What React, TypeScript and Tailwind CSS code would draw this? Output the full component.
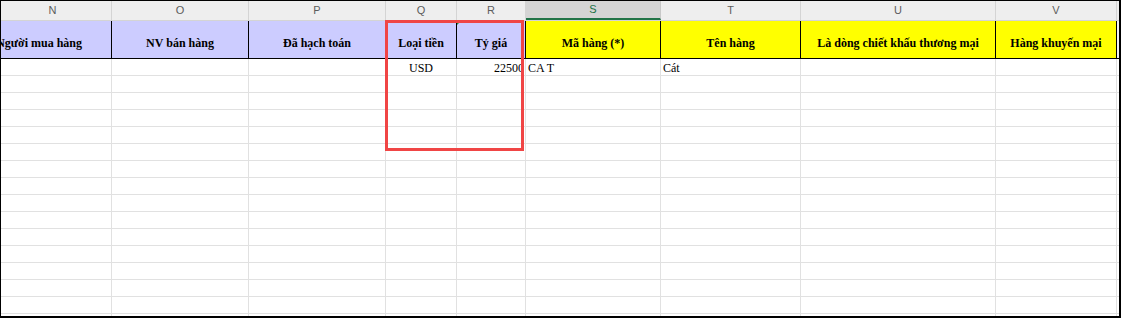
type Col = {
  key: string;
  w: string;
  head: string;
  bg: string;
};

const cols: Col[] = [
  { key: "N", w: "w-[111px]", head: "Người mua hàng", bg: "bg-[#ccccff]" },
  { key: "O", w: "w-[137px]", head: "NV bán hàng", bg: "bg-[#ccccff]" },
  { key: "P", w: "w-[137px]", head: "Đã hạch toán", bg: "bg-[#ccccff]" },
  { key: "Q", w: "w-[71px]", head: "Loại tiền", bg: "bg-[#ccccff]" },
  { key: "R", w: "w-[69px]", head: "Tỷ giá", bg: "bg-[#ccccff]" },
  { key: "S", w: "w-[135px]", head: "Mã hàng (*)", bg: "bg-[#ffff00]" },
  { key: "T", w: "w-[140px]", head: "Tên hàng", bg: "bg-[#ffff00]" },
  { key: "U", w: "w-[195px]", head: "Là dòng chiết khấu thương mại", bg: "bg-[#ffff00]" },
  { key: "V", w: "w-[121px]", head: "Hàng khuyến mại", bg: "bg-[#ffff00]" },
];

const firstRow: Record<string, { text: string; align: string }> = {
  Q: { text: "USD", align: "justify-center" },
  R: { text: "22500", align: "justify-end pr-[1px]" },
  S: { text: "CA T", align: "justify-start pl-[2px]" },
  T: { text: "Cát", align: "justify-start pl-[2px]" },
};

function LetterRow() {
  return (
    <div className="flex h-[20px] shrink-0 border-b border-[#d4d4d4] bg-[#eeeeee] font-['Liberation_Sans',sans-serif] text-[11px] text-[#5c5c5c]">
      {cols.map((c) =>
        c.key === "S" ? (
          <div
            key={c.key}
            className={`${c.w} box-border flex shrink-0 items-center justify-center border-r border-b-2 border-r-[#c8c8c8] border-b-[#217346] bg-[#d4d4d4] text-[#217346]`}
          >
            {c.key}
          </div>
        ) : (
          <div
            key={c.key}
            className={`${c.w} box-border flex shrink-0 items-center justify-center border-r border-[#d4d4d4] ${
              c.key === "N" ? "pr-[7px]" : ""
            }`}
          >
            {c.key}
          </div>
        )
      )}
      <div className="flex-1" />
    </div>
  );
}

function HeaderRow() {
  return (
    <div className="flex h-[38px] shrink-0 border-b border-black font-['Liberation_Serif',serif] text-[12px] font-bold text-black">
      {cols.map((c) => (
        <div
          key={c.key}
          className={`${c.w} ${c.bg} relative box-border flex shrink-0 items-center overflow-hidden whitespace-nowrap border-r border-black pt-[6px] ${
            c.key === "N" ? "justify-end pr-[29px]" : "justify-center"
          }`}
        >
          {c.key === "R" && (
            <span className="absolute left-0 top-0 h-0 w-0 border-r-[4px] border-t-[4px] border-r-transparent border-t-[#1e8e3e]" />
          )}
          {c.head}
        </div>
      ))}
      <div className="flex-1 bg-[#f3f3f3]" />
    </div>
  );
}

function DataRow({ index }: { index: number }) {
  return (
    <div className="flex h-[17px] shrink-0 border-b border-[#e1e1e1] font-['Liberation_Serif',serif] text-[12px] leading-[14px] text-black">
      {cols.map((c) => {
        const cell = index === 0 ? firstRow[c.key] : undefined;
        return (
          <div
            key={c.key}
            className={`${c.w} box-border flex shrink-0 items-end overflow-hidden whitespace-nowrap border-r border-[#e1e1e1] ${
              cell ? cell.align : ""
            }`}
          >
            {cell?.text}
          </div>
        );
      })}
      <div className="flex-1" />
    </div>
  );
}

export default function App() {
  return (
    <div className="relative box-border flex h-[318px] w-[1121px] flex-col overflow-hidden border-l border-t border-r-2 border-b-2 border-black bg-white">
      <LetterRow />
      <HeaderRow />
      {Array.from({ length: 16 }).map((_, i) => (
        <DataRow key={i} index={i} />
      ))}

      {/* highlight box round Loại tiền / Tỷ giá */}
      <div className="pointer-events-none absolute left-[384px] top-[19px] box-border h-[131px] w-[139px] border-[3px] border-[#f04545]" />
    </div>
  );
}
